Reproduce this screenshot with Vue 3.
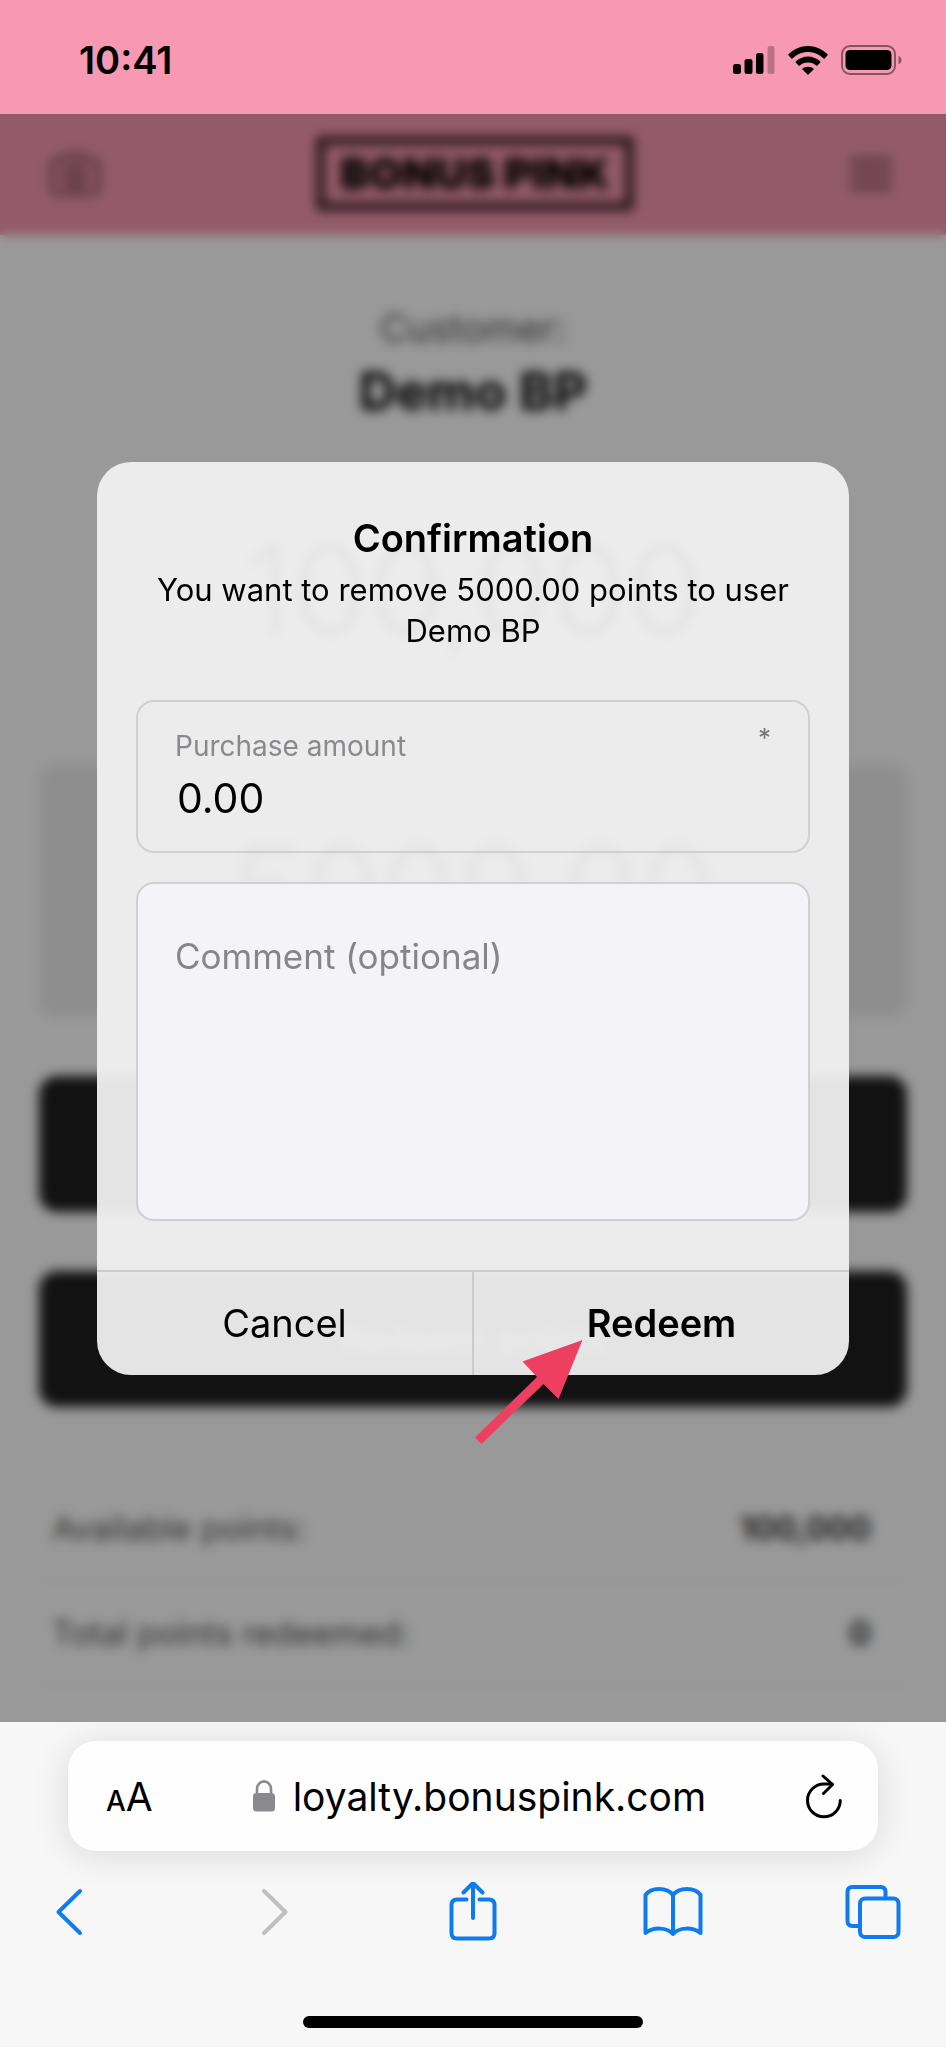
<script setup>
import { ref } from 'vue'

const amount = ref('0.00')
const comment = ref('')
const totals = [
  { label: 'Available points:', value: '100,000' },
  { label: 'Total points redeemed:', value: '0' },
]
</script>

<template>
  <div class="phone">
    <div class="status">
      <span class="time">10:41</span>
      <div class="indicators">
        <svg width="42" height="28" viewBox="0 0 42 28" aria-hidden="true">
          <rect x="0" y="18" width="8" height="10" rx="2.5" />
          <rect x="11.5" y="13" width="8" height="15" rx="2.5" />
          <rect x="23" y="7" width="7.5" height="21" rx="2.5" />
          <rect x="34.5" y="0" width="7" height="28" rx="2.5" opacity="0.25" />
        </svg>
        <svg width="40" height="29" viewBox="0 0 40 29" aria-hidden="true">
          <path d="M0 8.8 C11 -2.9 29 -2.9 40 8.8 L36.2 13 C27 3.6 13 3.6 3.8 13 Z" />
          <path d="M7.2 16 C14.5 8.6 25.5 8.6 32.8 16 L28.9 20 C24 15.4 16 15.4 11.1 20 Z" />
          <path d="M14 23 C17.4 20 22.6 20 26 23 L20 29 Z" />
        </svg>
        <svg width="61" height="30" viewBox="0 0 61 30" aria-hidden="true">
          <rect x="1" y="1" width="53" height="28" rx="8" fill="none" stroke="#000" stroke-opacity="0.45" stroke-width="2" />
          <rect x="4.5" y="5" width="46" height="20" rx="4.5" />
          <path d="M57.5 11 q3 1 3 4 t-3 4 z" opacity="0.45" />
        </svg>
      </div>
    </div>

    <div class="viewport">
      <div class="page">
        <header class="appbar">
          <svg width="50" height="44" viewBox="0 0 50 44" fill="none" stroke="#6f4352" stroke-width="4" stroke-linejoin="round" aria-hidden="true">
            <path d="M8 8 h6 l4 -5 h14 l4 5 h6 q6 0 6 6 v21 q0 6 -6 6 h-34 q-6 0 -6 -6 v-21 q0 -6 6 -6 z" />
            <circle cx="25" cy="24" r="10" />
            <path d="M25 18 v12" />
          </svg>
          <div class="logo">BONUS PINK</div>
          <svg width="42" height="34" viewBox="0 0 42 34" stroke="#6f4352" stroke-width="5" aria-hidden="true">
            <path d="M0 4 h42 M0 17 h42 M0 30 h42" />
          </svg>
        </header>
        <main class="content">
          <div class="customer">Customer:</div>
          <div class="name">Demo BP</div>
          <div class="balance">100,000</div>
          <div class="entry">5000.00</div>
          <button class="action" type="button" aria-label="Add points"></button>
          <button class="action" type="button">Redeem points</button>
          <dl class="totals">
            <div v-for="row in totals" :key="row.label" class="row">
              <dt>{{ row.label }}</dt>
              <dd>{{ row.value }}</dd>
            </div>
          </dl>
        </main>
      </div>

      <div class="overlay">
        <form class="dialog" role="dialog" aria-labelledby="dialog-title" @submit.prevent>
          <div class="body">
            <h1 id="dialog-title">Confirmation</h1>
            <p>You want to remove 5000.00 points to user Demo BP</p>
            <div class="field">
              <label for="amount">Purchase amount</label>
              <input id="amount" v-model="amount" type="text" inputmode="decimal" required />
              <span class="required">*</span>
            </div>
            <textarea v-model="comment" rows="5" aria-label="Comment (optional)" placeholder="Comment (optional)"></textarea>
          </div>
          <div class="footer">
            <button type="button">Cancel</button>
            <button type="submit" class="primary">Redeem</button>
          </div>
          <svg class="pointer" width="108" height="105" viewBox="0 0 108 105" aria-hidden="true">
            <path d="M107.5 0 L83.5 59 L68.5 44 L6.5 104 L0 97.5 L62 37 L47.5 21.5 Z" fill="#ed4060" />
          </svg>
        </form>
      </div>
    </div>

    <div class="browser">
      <div class="address">
        <button class="text-size" type="button" aria-label="Page settings"><span class="small">A</span><span>A</span></button>
        <div class="url">
          <svg width="22" height="32" viewBox="0 0 22 32" aria-hidden="true">
            <path d="M4 15 V9 a7 7.6 0 0 1 14 0 V15" fill="none" stroke="#8a8a8e" stroke-width="2.6" />
            <rect x="0" y="13" width="22" height="18.5" rx="3.5" fill="#8a8a8e" />
          </svg>
          <span>loyalty.bonuspink.com</span>
        </div>
        <button type="button" aria-label="Reload">
          <svg width="36" height="45" viewBox="0 0 36 45" fill="none" stroke="#000" stroke-width="3" stroke-linecap="round" stroke-linejoin="round">
            <path d="M34.3 26.5 A16.4 16.4 0 1 1 18 10 H26" />
            <path d="M17 2 L26.5 10.5 L17.5 19.5" />
          </svg>
        </button>
      </div>
      <nav class="tools">
        <button type="button" aria-label="Back">
          <svg viewBox="0 0 60 60"><path d="M38 9 L16.5 30 L38 51" /></svg>
        </button>
        <button type="button" aria-label="Forward" class="off" disabled>
          <svg viewBox="0 0 60 60"><path d="M22 9 L43.5 30 L22 51" /></svg>
        </button>
        <button type="button" aria-label="Share">
          <svg viewBox="0 0 60 60"><path d="M23.5 17.5 H14 q-5.5 0 -5.5 5.5 V51 q0 5.5 5.5 5.5 H46 q5.5 0 5.5 -5.5 V23 q0 -5.5 -5.5 -5.5 H36.5 M30 36 V1.5 M20.5 10.5 L30 1 L39.5 10.5" /></svg>
        </button>
        <button type="button" aria-label="Bookmarks">
          <svg viewBox="0 0 60 60"><path d="M30 13 C24 5 8 5 2.5 13 V51 C10 45 24 45 30 52 C36 45 50 45 57.5 51 V13 C52 5 36 5 30 13 V52" /></svg>
        </button>
        <button type="button" aria-label="Tabs">
          <svg viewBox="0 0 60 60"><rect x="17" y="16.5" width="38.5" height="38.5" rx="5" /><path d="M17 44 H9.5 q-5 0 -5 -5 V10 q0 -5 5 -5 H37.5 q5 0 5 5 V16" /></svg>
        </button>
      </nav>
      <div class="home"></div>
    </div>
  </div>
</template>

<style>
body {
  margin: 0;
}
</style>

<style scoped>
.phone {
  font-family: Inter, "Liberation Sans", sans-serif;
  color: #000;
  background: #f7f7f7;
}
button {
  margin: 0;
  padding: 0;
  border: 0;
  background: none;
  font: inherit;
  color: inherit;
}
svg {
  display: block;
  flex: none;
}
.status {
  display: flex;
  align-items: center;
  justify-content: space-between;
  height: 114px;
  box-sizing: border-box;
  padding: 6px 44px 0 79px;
  background: #f799b2;
}
.time {
  font-size: 38px;
  font-weight: 600;
}
.indicators {
  display: flex;
  align-items: center;
  gap: 13px;
}
.viewport {
  position: relative;
  overflow: hidden;
}
.page {
  background: #fff;
}
.appbar {
  display: flex;
  align-items: center;
  justify-content: space-between;
  padding: 23px 54px 25px 50px;
  background: #f598af;
}
.logo {
  border: 7px solid #1a1013;
  padding: 0 16px;
  font-size: 43px;
  line-height: 59px;
  font-weight: 900;
}
.content {
  padding: 61px 39px 36px;
  text-align: center;
}
.customer {
  font-size: 38px;
  line-height: 64px;
  color: #555;
}
.name {
  font-size: 52px;
  line-height: 64px;
  font-weight: 700;
}
.balance {
  margin: 106px 0 115px;
  font-size: 124px;
  line-height: 120px;
  font-weight: 300;
}
.entry {
  margin-bottom: 59px;
  padding: 66px 0;
  border-radius: 16px;
  background: #ededed;
  font-size: 124px;
  line-height: 120px;
  font-weight: 300;
}
.action {
  display: block;
  width: 100%;
  min-height: 136px;
  margin-bottom: 59px;
  border-radius: 18px;
  background: #1e1e1e;
  color: #fff;
  font-size: 38px;
}
.totals {
  margin: 69px 0 0;
}
.row {
  display: flex;
  justify-content: space-between;
  padding: 28px 36px 28px 13px;
  border-bottom: 1px solid #f2f2f2;
  font-size: 33px;
  line-height: 48px;
  color: #555;
}
.row dd {
  margin: 0;
  font-weight: 600;
  color: #222;
}
.overlay {
  position: absolute;
  inset: 0;
  display: flex;
  align-items: center;
  padding: 0 97px;
  background: rgba(0, 0, 0, 0.4);
  backdrop-filter: blur(6px);
}
.dialog {
  position: relative;
  flex: 1;
  border-radius: 34px;
  background: rgba(241, 241, 241, 0.94);
}
.body {
  padding: 52px 39px 49px;
}
h1 {
  margin: 0 0 7px;
  font-size: 38px;
  line-height: 48px;
  font-weight: 600;
  text-align: center;
}
p {
  margin: 0 20px 49px;
  font-size: 31px;
  line-height: 41px;
  text-align: center;
}
.field {
  position: relative;
  margin-bottom: 29px;
  padding: 26px 37px 29px;
  border: 2px solid #d0d0d3;
  border-radius: 18px;
}
.field label {
  display: block;
  margin-bottom: 10px;
  font-size: 28px;
  line-height: 36px;
  color: #8a8a8e;
}
.field input {
  display: block;
  width: 100%;
  height: 48px;
  padding: 0 2px;
  box-sizing: border-box;
  border: 0;
  outline: 0;
  background: none;
  font: inherit;
  font-size: 41px;
  color: #000;
}
.required {
  position: absolute;
  top: 20px;
  right: 37px;
  font-size: 26px;
  line-height: 32px;
  color: #77777b;
}
textarea {
  display: block;
  width: 100%;
  box-sizing: border-box;
  padding: 48px 37px 47px;
  border: 2px solid #d0d0d3;
  border-radius: 18px;
  outline: 0;
  resize: none;
  overflow: hidden;
  background: #f3f3f8;
  font: inherit;
  font-size: 35px;
  line-height: 48px;
}
textarea::placeholder {
  color: #85858a;
  opacity: 1;
}
.footer {
  display: flex;
  border-top: 2px solid #cbcbcb;
}
.footer button {
  flex: 1;
  font-size: 38px;
  line-height: 103px;
}
.footer .primary {
  border-left: 2px solid #cbcbcb;
  font-weight: 600;
}
.pointer {
  position: absolute;
  left: calc(50% + 2px);
  bottom: -70px;
}
.browser {
  padding: 19px 0;
}
.address {
  display: flex;
  align-items: center;
  justify-content: space-between;
  margin: 0 68px;
  padding: 0 36px 0 38px;
  height: 110px;
  border-radius: 28px;
  background: #fefefe;
  box-shadow: 0 4px 36px rgba(0, 0, 0, 0.12);
}
.text-size {
  font-size: 39px;
}
.text-size .small {
  font-size: 28px;
  font-weight: 500;
}
.url {
  display: flex;
  align-items: center;
  gap: 18px;
  font-size: 39px;
}
.tools {
  display: flex;
  justify-content: space-between;
  margin: 31px 43px 74px 42px;
}
.tools svg {
  width: 60px;
  height: 60px;
  fill: none;
  stroke: #0f7bee;
  stroke-width: 4;
  stroke-linecap: round;
  stroke-linejoin: round;
}
.tools .off svg {
  stroke: #bfbfbf;
}
.home {
  width: 36%;
  height: 12px;
  margin: 0 auto;
  border-radius: 6px;
  background: #000;
}
</style>
